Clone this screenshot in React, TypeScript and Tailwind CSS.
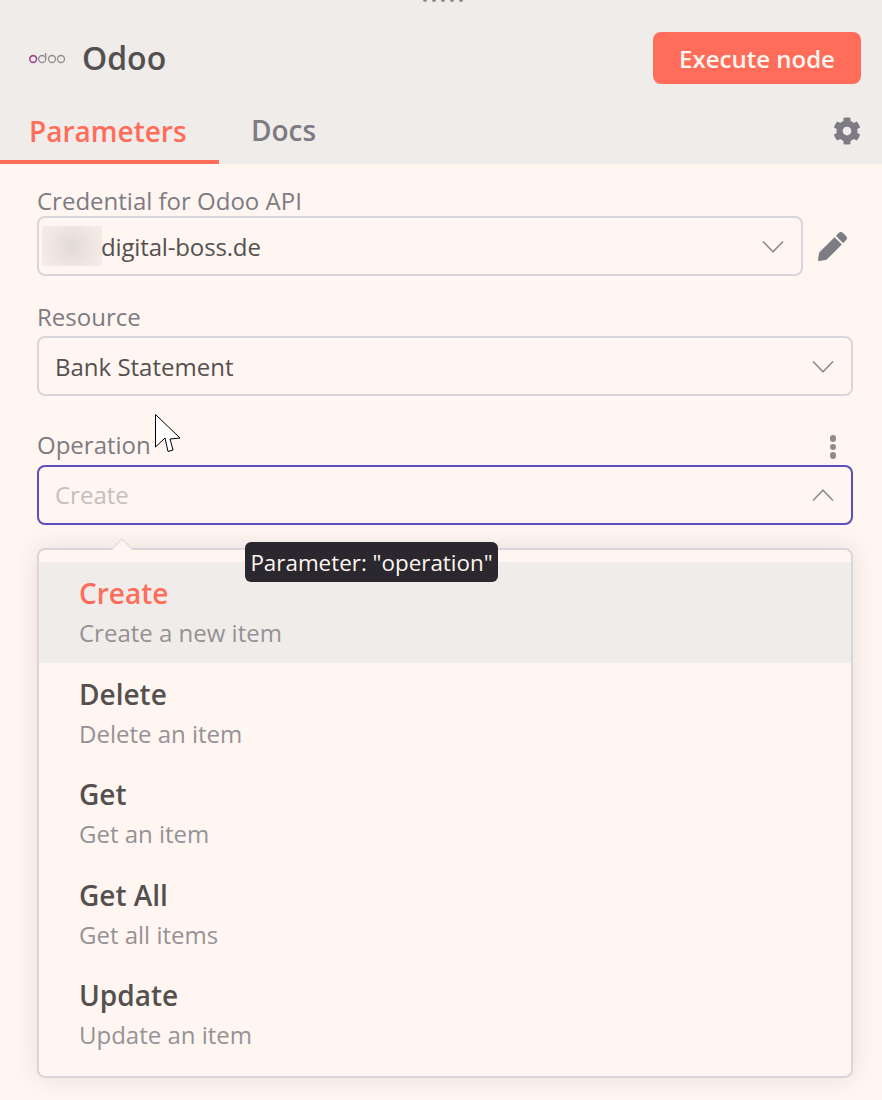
const options = [
  { name: "Create", desc: "Create a new item", active: true },
  { name: "Delete", desc: "Delete an item" },
  { name: "Get", desc: "Get an item" },
  { name: "Get All", desc: "Get all items" },
  { name: "Update", desc: "Update an item" },
];

const OdooLogo = () => (
  <svg width="37" height="12" viewBox="0 0 37 12" fill="none">
    <circle cx="4.2" cy="7" r="3.4" stroke="#a24689" strokeWidth="1.6" />
    <circle cx="13.2" cy="7" r="3.5" stroke="#8f8f8f" strokeWidth="1.3" />
    <path d="M16.7 1v6" stroke="#8f8f8f" strokeWidth="1.3" />
    <circle cx="23" cy="7" r="3.5" stroke="#8f8f8f" strokeWidth="1.3" />
    <circle cx="32" cy="7" r="3.5" stroke="#8f8f8f" strokeWidth="1.3" />
  </svg>
);

const Gear = () => (
  <svg width="28" height="28" viewBox="0 0 512 512" fill="#7d7b83">
    <path d="M487.4 315.7l-42.6-24.6c4.3-23.2 4.3-47 0-70.2l42.6-24.6c4.9-2.8 7.1-8.6 5.5-14-11.1-35.6-30-67.8-54.7-94.6-3.8-4.1-10-5.1-14.8-2.3L380.8 110c-17.9-15.4-38.5-27.3-60.8-35.1V25.8c0-5.6-3.9-10.5-9.4-11.7-36.7-8.2-74.3-7.8-109.2 0-5.5 1.2-9.4 6.1-9.4 11.7V75c-22.2 7.9-42.8 19.8-60.8 35.1L88.7 85.5c-4.9-2.8-11-1.9-14.8 2.3-24.7 26.7-43.6 58.9-54.7 94.6-1.7 5.4.6 11.2 5.5 14L67.3 221c-4.3 23.2-4.3 47 0 70.2l-42.6 24.6c-4.9 2.8-7.1 8.6-5.5 14 11.1 35.6 30 67.8 54.7 94.6 3.8 4.1 10 5.1 14.8 2.3l42.6-24.6c17.9 15.4 38.5 27.3 60.8 35.1v49.2c0 5.6 3.9 10.5 9.4 11.7 36.7 8.2 74.3 7.8 109.2 0 5.5-1.2 9.4-6.1 9.4-11.7v-49.2c22.2-7.9 42.8-19.8 60.8-35.1l42.6 24.6c4.9 2.8 11 1.9 14.8-2.3 24.7-26.7 43.6-58.9 54.7-94.6 1.5-5.5-.7-11.3-5.6-14.1zM256 336c-44.1 0-80-35.9-80-80s35.9-80 80-80 80 35.9 80 80-35.9 80-80 80z" />
  </svg>
);

const Pencil = () => (
  <svg width="29" height="29" viewBox="0 0 512 512" fill="#7d7b83">
    <path d="M497.9 142.1l-46.1 46.1c-4.7 4.7-12.3 4.7-17 0l-111-111c-4.7-4.7-4.7-12.3 0-17l46.1-46.1c18.7-18.7 49.1-18.7 67.9 0l60.1 60.1c18.8 18.7 18.8 49.1 0 67.9zM284.2 99.8L21.6 362.4.4 483.9c-2.9 16.4 11.4 30.6 27.8 27.8l121.5-21.3 262.6-262.6c4.7-4.7 4.7-12.3 0-17l-111-111c-4.8-4.7-12.4-4.7-17.1 0z" />
  </svg>
);

const Chevron = ({ up = false }: { up?: boolean }) => (
  <svg width="22" height="12" viewBox="0 0 22 12" fill="none" stroke="#8f8c90" strokeWidth="1.6" className="ml-auto">
    <path d={up ? "M1 11.5 11 1.2 21 11.5" : "M1 .5 11 10.8 21 .5"} />
  </svg>
);

const Cursor = () => (
  <svg width="26" height="40" viewBox="0 0 26 40" fill="#ffffff" stroke="#000000" strokeWidth="1">
    <path d="M.5.5V33L10 24l3 13.5 5-1.5-3-11 10-1z" />
  </svg>
);

export default function App() {
  return (
    <div className="relative w-[882px] h-[1100px] overflow-hidden bg-[#fff6f1] font-['Open_Sans',sans-serif]">
      <div className="relative h-[164px] bg-[#f0ecea]">
        <div className="flex justify-center gap-[5px] h-[2px] pl-[4px]">
          <span className="w-[4px] h-[2px] rounded-b-full bg-[#8f8c8c]" />
          <span className="w-[4px] h-[2px] rounded-b-full bg-[#8f8c8c]" />
          <span className="w-[4px] h-[2px] rounded-b-full bg-[#8f8c8c]" />
          <span className="w-[4px] h-[2px] rounded-b-full bg-[#8f8c8c]" />
          <span className="w-[4px] h-[2px] rounded-b-full bg-[#8f8c8c]" />
        </div>
        <div className="flex items-center pl-[29px] pr-[21px] pt-[30px]">
          <OdooLogo />
          <span className="ml-[16px] text-[32px] leading-[52px] font-[550] text-[#555050]">Odoo</span>
          <button className="ml-auto w-[208px] h-[52px] pt-[1px] rounded-[8px] bg-[#ff6d5a] text-[24px] font-semibold text-[#fff5f0]">
            Execute node
          </button>
        </div>
        <div className="flex items-start mt-[22px]">
          <div className="w-[219px] h-[58px] pl-[29px] border-b-[4px] border-[#ff6d5a] text-[28px] leading-[50px] font-semibold text-[#ff6d5a]">
            Parameters
          </div>
          <div className="ml-[32px] text-[28px] leading-[49px] font-semibold text-[#7d7b83]">Docs</div>
          <div className="ml-auto mr-[21px] mt-[11px]">
            <Gear />
          </div>
        </div>
      </div>

      <div className="px-[37px] pr-[29px]">
        <div className="mt-[22px] text-[24px] leading-[30px] text-[#7d7b83]">Credential for Odoo API</div>
        <div className="flex items-center">
          <div className="flex items-center w-[766px] h-[60px] pt-[2px] border-2 border-[#d9d5da] rounded-[8px] pl-[3px] pr-[17px]">
            <span className="w-[60px] h-[40px] -mt-[2px] mr-[-1px] bg-[radial-gradient(circle,#e2dad7_0%,#f0e7e3_60%,#f6ede9_100%)]" />
            <span className="text-[24px] tracking-[-0.15px] text-[#555050]">digital-boss.de</span>
            <Chevron />
          </div>
          <div className="ml-[15px]">
            <Pencil />
          </div>
        </div>

        <div className="mt-[26px] text-[24px] leading-[30px] text-[#7d7b83]">Resource</div>
        <div className="flex items-center h-[60px] mt-[4px] pt-[2px] border-2 border-[#d9d5da] rounded-[8px] pl-[16px] pr-[17px]">
          <span className="text-[24px] text-[#555050]">Bank Statement</span>
          <Chevron />
        </div>

        <div className="flex items-start justify-between mt-[34px] h-[35px]">
          <span className="text-[24px] leading-[30px] text-[#7d7b83]">Operation</span>
          <div className="flex flex-col gap-[2px] mr-[17px] mt-[5px]">
            <span className="w-[6.5px] h-[6.5px] rounded-full bg-[#8f8c8c]" />
            <span className="w-[6.5px] h-[6.5px] rounded-full bg-[#8f8c8c]" />
            <span className="w-[6.5px] h-[6.5px] rounded-full bg-[#8f8c8c]" />
          </div>
        </div>
        <div className="flex items-center h-[60px] border-2 border-[#5c4ebc] rounded-[8px] pl-[16px] pr-[17px]">
          <span className="text-[24px] text-[#c4c0bf]">Create</span>
          <Chevron up />
        </div>

        <div className="relative mt-[23px] h-[530px] border-2 border-[#d9d5da] rounded-[8px] bg-[#fff6f1] shadow-[0_0_24px_rgba(0,0,0,0.1)]">
          <span className="absolute -top-[9px] left-[75px] w-[16px] h-[16px] rotate-45 rounded-tl-[2px] border-l-2 border-t-2 border-[#e6e1e2] bg-[#fff6f1]" />
          <div className="pt-[12px]">
            {options.map((o) => (
              <div
                key={o.name}
                className={`h-[100.5px] pl-[40px] pt-[12px] ${o.active ? "bg-[#f0ecea]" : ""}`}
              >
                <div className={`text-[28px] leading-[38px] font-semibold ${o.active ? "text-[#ff6d5a]" : "text-[#555050]"}`}>
                  {o.name}
                </div>
                <div className="text-[24px] leading-[34px] mt-[4px] text-[#959296]">{o.desc}</div>
              </div>
            ))}
          </div>
        </div>
      </div>

      <div className="absolute left-[245px] top-[542px] w-[253px] h-[40px] pt-[2px] flex items-center justify-center rounded-[6px] bg-[#2a282e] text-[22.4px] text-[#fff5f0]">
        Parameter: "operation"
      </div>
      <div className="absolute left-[155px] top-[414px]">
        <Cursor />
      </div>
    </div>
  );
}
